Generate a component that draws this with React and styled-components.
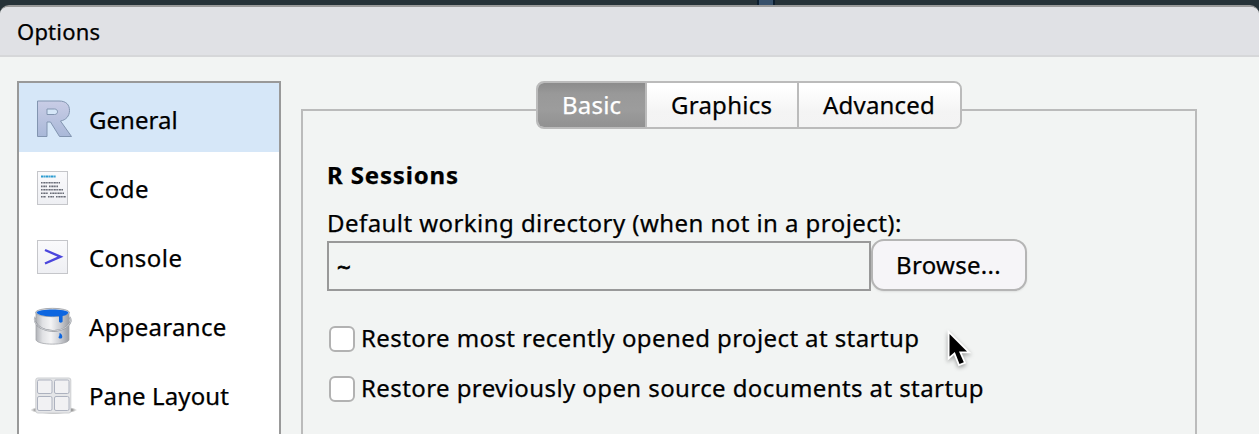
import React from "react";
import styled, { createGlobalStyle } from "styled-components";

const GlobalStyle = createGlobalStyle`
  * { box-sizing: border-box; }
  body {
    margin: 0;
    overflow: hidden;
    background: #263238;
    color: #000;
    font-family: "Noto Sans", "Open Sans", sans-serif;
    font-size: 24px;
    line-height: 32px;
  }
`;

const Screen = styled.div`
  position: relative;
  height: 434px;
  overflow: hidden;
  display: flex;
  flex-direction: column;
`;

const Backdrop = styled.div`
  flex: none;
  height: 5px;
  display: flex;
  justify-content: flex-start;
  padding-left: 757px;
`;

const Splitter = styled.div`
  width: 18px;
  background: #37506b;
  border: solid #0c1d2e;
  border-width: 0 2px;
`;

const Dialog = styled.div`
  flex: 1;
  display: flex;
  flex-direction: column;
  background: #f2f4f3;
  border-top: 2px solid #999;
  border-radius: 9px 9px 0 0;
  overflow: hidden;
`;

const TitleBar = styled.header`
  flex: none;
  height: 50px;
  padding: 8px 17px 0;
  background: #e0e1e5;
  border-bottom: 2px solid #d6d7d9;
  font-size: 22px;
`;

const Body = styled.div`
  flex: 1;
  display: flex;
  gap: 20px;
  padding: 24px 62px 0 17px;
`;

const Nav = styled.nav`
  flex: none;
  width: 264px;
  height: 400px;
  background: #fff;
  border: 2px solid #999;
`;

const NavItem = styled.div`
  display: flex;
  align-items: center;
  height: 69px;
  padding: 5px 0 0 13px;
  gap: 13px;
  background: ${(p) => (p.$active ? "#d6e7f8" : "transparent")};

  svg {
    flex: none;
    margin-top: -5px;
    overflow: visible;
  }
`;

const Text = styled.span`
  white-space: nowrap;
  letter-spacing: ${(p) => p.$track || 0}px;
  -webkit-text-stroke: 0.25px currentColor;
`;

const Main = styled.main`
  flex: 1;
  display: flex;
  flex-direction: column;
  align-items: stretch;
`;

const Tabs = styled.div`
  position: relative;
  z-index: 1;
  align-self: center;
  display: flex;
  height: 48px;
  margin-bottom: -20px;
  border: 2px solid #bbb;
  border-radius: 8px;
  overflow: hidden;
`;

const Tab = styled.div`
  width: ${(p) => p.$width}px;
  padding-top: 6px;
  padding-left: 24px;
  color: ${(p) => (p.$active ? "#fff" : "#000")};
  background: ${(p) =>
    p.$active
      ? "linear-gradient(#8c8c8c, #999 25%, #9c9c9c 60%, #919191)"
      : "linear-gradient(#fff 10%, #f4f4f4 65%, #f3f3f3)"};

  & + & {
    border-left: 2px solid #bbb;
  }
`;

const Panel = styled.section`
  height: 360px;
  border: 2px solid #bbb;
  padding: 48px 24px 0;
`;

const Heading = styled.h2`
  margin: 0;
  font-size: 24px;
  line-height: 32px;
  font-weight: 700;
`;

const Field = styled.div`
  margin-top: 16px;
`;

const FieldLabel = styled.div`
  height: 32px;
`;

const FieldRow = styled.div`
  display: flex;
  align-items: flex-end;
`;

const PathInput = styled.div`
  width: 544px;
  height: 50px;
  padding: 8px 8px;
  border: 2px solid #999;
  -webkit-text-stroke: 0.8px #000;
`;

const Button = styled.div`
  width: 156px;
  height: 52px;
  padding: 8px 0 0 23px;
  background: #f6f5f8;
  border: 2px solid #b5b5b5;
  border-radius: 13px;
  box-shadow: 0 1px 2px rgba(0, 0, 0, 0.08);
`;

const Checks = styled.div`
  display: flex;
  flex-direction: column;
  gap: 18px;
  padding: 31px 0 0 2px;
`;

const CheckRow = styled.label`
  display: flex;
  align-items: flex-end;
  gap: 6px;
  height: 32px;
`;

const CheckBox = styled.span`
  width: 26px;
  height: 26px;
  margin-bottom: 2px;
  background: #fff;
  border: 2px solid #b2b2b2;
  border-radius: 6px;
`;

const Cursor = styled.svg`
  position: absolute;
  left: 942px;
  top: 329px;
  filter: drop-shadow(0 2px 2px rgba(0, 0, 0, 0.35));
`;

const RIcon = () => (
  <svg width="44" height="44" viewBox="0 0 44 44">
    <defs>
      <linearGradient id="rFill" x1="0" y1="0" x2="0" y2="1">
        <stop offset="0" stopColor="#c9cde6" />
        <stop offset="1" stopColor="#a9b8d8" />
      </linearGradient>
    </defs>
    <path
      fillRule="evenodd"
      d="M5.500 5H27C34.500 5 37.500 9 37.500 14.500C37.500 20 34 24 28.500 25L39.500 40.500H27.500L18.500 26H15V40.500H5.500ZM15 13V18.500H22.500C26.500 18.500 26.500 13 22.500 13Z"
      fill="url(#rFill)"
      stroke="#8295b0"
      strokeWidth="1"
      strokeLinejoin="round"
    />
  </svg>
);

const Sheet = ({ id }) => (
  <>
    <defs>
      <linearGradient id={id} x1="0" y1="0" x2="0" y2="1">
        <stop offset="0" stopColor="#fafafc" />
        <stop offset="1" stopColor="#eeeff3" />
      </linearGradient>
    </defs>
    <rect x="5.500" y="6.500" width="30" height="33" fill={`url(#${id})`} stroke="#c5c6ca" />
  </>
);

const CodeIcon = () => (
  <svg width="44" height="44" viewBox="0 0 44 44">
    <Sheet id="codeSheet" />
    <path d="M9 11.500h15" stroke="#2a9bd0" strokeWidth="2.200" strokeDasharray="2.600 .5 1.500 .4" />
    <g stroke="#676a75" strokeWidth="1.600" strokeDasharray="1.600 .7 2.300 .5">
      <path d="M9 17.800h19" />
      <path d="M9 21.400h6M17 21.400h9" />
      <path d="M9 24.800h22" />
      <path d="M9 28.300h7M18 28.300h14" />
      <path d="M9 31.800h5M16 31.800h6M24 31.800h10" />
    </g>
  </svg>
);

const ConsoleIcon = () => (
  <svg width="44" height="44" viewBox="0 0 44 44">
    <Sheet id="consoleSheet" />
    <path d="M13 16L28.500 22.700L13 29.500" fill="none" stroke="#4b46dc" strokeWidth="2.400" />
  </svg>
);

const PaintIcon = () => (
  <svg width="44" height="44" viewBox="0 0 44 44">
    <defs>
      <linearGradient id="bucket">
        <stop offset="0" stopColor="#b0b2b7" />
        <stop offset=".2" stopColor="#e0e1e4" />
        <stop offset=".45" stopColor="#f4f4f5" />
        <stop offset=".72" stopColor="#cdcfd4" />
        <stop offset="1" stopColor="#9c9ea3" />
      </linearGradient>
    </defs>
    <path d="M4 9.500V37C6 42.500 35 42.500 37 37V9.500Z" fill="url(#bucket)" stroke="#a2a5aa" strokeWidth=".8" />
    <ellipse cx="20.500" cy="9.500" rx="17" ry="4.200" fill="#d9dbdf" stroke="#9a9da2" strokeWidth=".8" />
    <path
      d="M4.500 9.500C6 5.500 35 5.500 36.500 9.500C35 12.500 32 12.700 30.600 12.900V18.500C30.400 20 27.200 20 27 18.500V13.300C18 13.800 6 13 4.500 9.500Z"
      fill="#0d66e0"
    />
    <path d="M3.500 14C1 18 4 21.500 9 25C18 30 31 28.500 37 21.500C39.500 18 39 16 37.500 14" fill="none" stroke="#92959b" strokeWidth="1.900" />
    <path d="M3.500 14C1 18 4 21.500 9 25C18 30 31 28.500 37 21.500C39.500 18 39 16 37.500 14" fill="none" stroke="#e8eaec" strokeWidth=".7" />
    <path d="M27.500 30C29.500 30.500 31 33 30 35C28.500 36.200 26.500 35.500 26.500 34C27.500 33 27.500 31.500 27.500 30Z" fill="#0d66e0" />
  </svg>
);

const PanesIcon = () => (
  <svg width="44" height="44" viewBox="0 0 44 44">
    <defs>
      <radialGradient id="floor">
        <stop offset="0" stopColor="#444" />
        <stop offset=".75" stopColor="#666" stopOpacity=".85" />
        <stop offset="1" stopColor="#888" stopOpacity="0" />
      </radialGradient>
    </defs>
    <ellipse cx="21.700" cy="38" rx="23.500" ry="4" fill="url(#floor)" />
    <rect x="3.800" y="6" width="35" height="35" rx="2" fill="#e5e6e8" stroke="#cdcfd2" />
    <g fill="#f1f1f3" stroke="#adb2bf">
      <rect x="5.500" y="8" width="14.500" height="13.500" rx="1.500" />
      <rect x="22.500" y="8" width="14.500" height="13.500" rx="1.500" />
      <rect x="5.500" y="24.500" width="14.500" height="14" rx="1.500" />
      <rect x="22.500" y="24.500" width="14.500" height="14" rx="1.500" />
    </g>
  </svg>
);

const sections = [
  { label: "General", Icon: RIcon, track: 0.05, active: true },
  { label: "Code", Icon: CodeIcon, track: 0.5 },
  { label: "Console", Icon: ConsoleIcon, track: 0.45 },
  { label: "Appearance", Icon: PaintIcon, track: 0.3 },
  { label: "Pane Layout", Icon: PanesIcon, track: 0.1 },
];

const tabs = [
  { label: "Basic", width: 107, track: 0.2, active: true },
  { label: "Graphics", width: 152, track: 0.25 },
  { label: "Advanced", width: 163, track: 0.2 },
];

const options = [
  { label: "Restore most recently opened project at startup", track: 0.41 },
  { label: "Restore previously open source documents at startup", track: 0.41 },
];

export default function App() {
  return (
    <Screen>
      <GlobalStyle />
      <Backdrop>
        <Splitter />
      </Backdrop>
      <Dialog>
        <TitleBar>
          <Text $track={0.2}>Options</Text>
        </TitleBar>
        <Body>
          <Nav>
            {sections.map(({ label, Icon, track, active }) => (
              <NavItem key={label} $active={active}>
                <Icon />
                <Text $track={track}>{label}</Text>
              </NavItem>
            ))}
          </Nav>
          <Main>
            <Tabs>
              {tabs.map(({ label, width, track, active }) => (
                <Tab key={label} $width={width} $active={active}>
                  <Text $track={track}>{label}</Text>
                </Tab>
              ))}
            </Tabs>
            <Panel>
              <Heading>
                <Text $track={0.85}>R Sessions</Text>
              </Heading>
              <Field>
                <FieldLabel>
                  <Text $track={0.44}>Default working directory (when not in a project):</Text>
                </FieldLabel>
                <FieldRow>
                  <PathInput>~</PathInput>
                  <Button>
                    <Text $track={0.3}>Browse...</Text>
                  </Button>
                </FieldRow>
              </Field>
              <Checks>
                {options.map(({ label, track }) => (
                  <CheckRow key={label}>
                    <CheckBox />
                    <Text $track={track}>{label}</Text>
                  </CheckRow>
                ))}
              </Checks>
            </Panel>
          </Main>
        </Body>
      </Dialog>
      <Cursor width="32" height="44" viewBox="0 0 32 44">
        <path
          d="M7.500 5V27.500L12.800 23L17.500 35L21.800 33.200L17 22.500H25Z"
          fill="#000"
          stroke="#fff"
          strokeWidth="3.600"
          paintOrder="stroke"
        />
      </Cursor>
    </Screen>
  );
}
